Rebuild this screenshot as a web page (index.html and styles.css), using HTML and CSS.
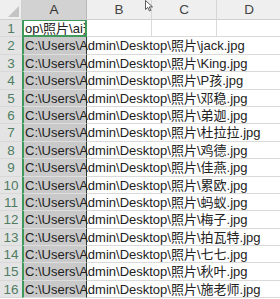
FILE: index.html
```html
<!DOCTYPE html>
<html lang="zh-CN">
<head>
  <meta charset="UTF-8" />
  <meta name="viewport" content="width=device-width, initial-scale=1.0" />
  <title>照片路径</title>
  <link rel="stylesheet" href="styles.css">
</head>
<body>
  <div class="sheet">
    <div class="row head">
      <div class="corner"><span class="tri"></span></div>
      <div class="col-h sel">A</div>
      <div class="col-h">B</div>
      <div class="col-h">C</div>
      <div class="col-h">D</div>
    </div>

    <div class="row first">
      <div class="rh">1</div>
      <div class="cell a active"><span class="clip">op\照片\ai这</span></div>
      <div class="cell">&nbsp;</div>
      <div class="cell">&nbsp;</div>
      <div class="cell">&nbsp;</div>
    </div>

    <div class="row"><div class="rh">2</div><div class="cell a">C:\Users\Admin\Desktop\照片\jack.jpg</div><div class="rest"></div></div>
    <div class="row"><div class="rh">3</div><div class="cell a">C:\Users\Admin\Desktop\照片\King.jpg</div><div class="rest"></div></div>
    <div class="row"><div class="rh">4</div><div class="cell a">C:\Users\Admin\Desktop\照片\P孩.jpg</div><div class="rest"></div></div>
    <div class="row"><div class="rh">5</div><div class="cell a">C:\Users\Admin\Desktop\照片\邓稳.jpg</div><div class="rest"></div></div>
    <div class="row"><div class="rh">6</div><div class="cell a">C:\Users\Admin\Desktop\照片\弟迦.jpg</div><div class="rest"></div></div>
    <div class="row"><div class="rh">7</div><div class="cell a">C:\Users\Admin\Desktop\照片\杜拉拉.jpg</div><div class="rest"></div></div>
    <div class="row"><div class="rh">8</div><div class="cell a">C:\Users\Admin\Desktop\照片\鸡德.jpg</div><div class="rest"></div></div>
    <div class="row"><div class="rh">9</div><div class="cell a">C:\Users\Admin\Desktop\照片\佳燕.jpg</div><div class="rest"></div></div>
    <div class="row"><div class="rh">10</div><div class="cell a">C:\Users\Admin\Desktop\照片\累欧.jpg</div><div class="rest"></div></div>
    <div class="row"><div class="rh">11</div><div class="cell a">C:\Users\Admin\Desktop\照片\蚂蚁.jpg</div><div class="rest"></div></div>
    <div class="row"><div class="rh">12</div><div class="cell a">C:\Users\Admin\Desktop\照片\梅子.jpg</div><div class="rest"></div></div>
    <div class="row"><div class="rh">13</div><div class="cell a">C:\Users\Admin\Desktop\照片\拍瓦特.jpg</div><div class="rest"></div></div>
    <div class="row"><div class="rh">14</div><div class="cell a">C:\Users\Admin\Desktop\照片\七七.jpg</div><div class="rest"></div></div>
    <div class="row"><div class="rh">15</div><div class="cell a">C:\Users\Admin\Desktop\照片\秋叶.jpg</div><div class="rest"></div></div>
    <div class="row"><div class="rh">16</div><div class="cell a">C:\Users\Admin\Desktop\照片\施老师.jpg</div><div class="rest"></div></div>

    <svg class="cursor" width="9" height="12" viewBox="0 0 9 12">
      <path d="M0.5 0.5 L0.5 9.5 L2.8 7.4 L4.4 11 L5.8 10.4 L4.3 6.9 L7.5 6.9 Z" fill="#fff" stroke="#333" stroke-width="0.8"/>
    </svg>
  </div>
</body>
</html>
```

FILE: styles.css
```css
* { box-sizing: border-box; }
body {
  margin: 0;
  background: #fff;
  font-family: "Liberation Sans", Arial, "Noto Sans CJK SC", sans-serif;
  font-size: 13px;
  color: #222;
  overflow: hidden;
}
.sheet { position: relative; width: 280px; height: 299px; overflow: hidden; }

.row { display: flex; height: 17.4px; }
.row.head { height: 20px; background: #efefef; border-bottom: 1px solid #d0d0d0; }

.corner {
  width: 22px;
  flex: none;
  border-right: 1px solid #d0d0d0;
  display: flex;
  align-items: flex-end;
  justify-content: flex-end;
  padding: 0 2px 2px 0;
}
.tri {
  width: 0;
  height: 0;
  border-left: 11px solid transparent;
  border-bottom: 11px solid #c4c4c4;
}
.col-h {
  width: 65px;
  flex: none;
  text-align: center;
  line-height: 19px;
  color: #444;
  font-size: 13.5px;
  border-right: 1px solid #d6d6d6;
}
.col-h.sel { background: #d2d2d2; color: #333; border-right-color: #b8b8b8; }

.rh {
  width: 22px;
  flex: none;
  background: #e4e4e4;
  color: #4f7d63;
  text-align: center;
  font-size: 13.5px;
  line-height: 17px;
  border-bottom: 1px solid #d8d8d8;
}

.cell {
  width: 65px;
  flex: none;
  white-space: nowrap;
  line-height: 17px;
  padding-left: 2px;
  border-bottom: 1px solid #dadada;
  border-right: 1px solid #dadada;
}
.cell.a {
  background: #c9c9c9;
  border-left: 2px solid #3f9a5c;
  border-right: 1px solid #2c3a30;
  border-bottom-color: #dedede;
  padding-left: 1px;
}
.cell.a.active {
  background: #fff;
  border: 2px solid #3f9a5c;
  border-top-width: 1px;
  overflow: hidden;
  line-height: 15px;
}
.clip { display: block; }
.rest { flex: 1; border-bottom: 1px solid #dadada; }

.cursor { position: absolute; left: 145px; top: 0; }
```
